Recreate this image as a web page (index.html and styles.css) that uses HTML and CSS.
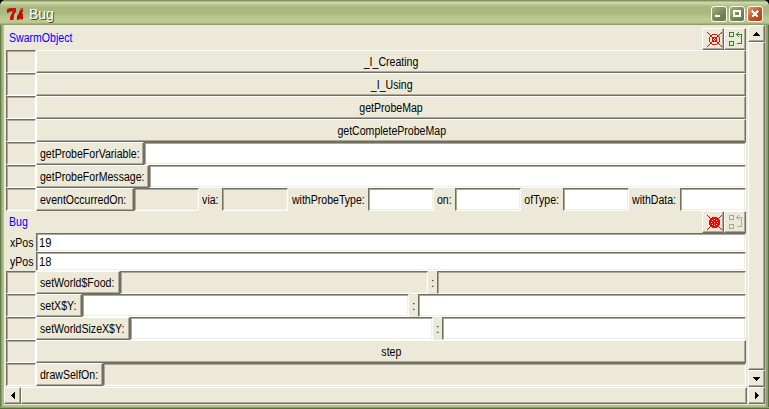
FILE: index.html
```
<!DOCTYPE html>
<html lang="en">
<head>
<meta charset="utf-8">
<title>Bug</title>
<link rel="stylesheet" href="styles.css">
</head>
<body>
<svg width="0" height="0" class="defs">
  <symbol id="cross" viewBox="0 0 15 15"><path d="M0 0h1v1h1v1h1v1h1v1h1v1h1v1h1v1h1v-1h1v-1h1v-1h1v-1h1v-1h1v-1h1v-1h1v1h-1v1h-1v1h-1v1h-1v1h-1v1h-1v1h-1v1h1v1h1v1h1v1h1v1h1v1h1v1h1v1h-1v-1h-1v-1h-1v-1h-1v-1h-1v-1h-1v-1h-1v-1h-1v1h-1v1h-1v1h-1v1h-1v1h-1v1h-1v1h-1v-1h1v-1h1v-1h1v-1h1v-1h1v-1h1v-1h1v-1h-1v-1h-1v-1h-1v-1h-1v-1h-1v-1h-1v-1h-1z"/></symbol>
  <symbol id="target" viewBox="0 0 15 15"><use href="#cross" width="15" height="15"/><path d="M5 2h5v1H5zM5 12h5v1H5zM2 5h1v5H2zM12 5h1v5h-1zM4 3h1v1H4zM10 3h1v1h-1zM3 4h1v1H3zM11 4h1v1h-1zM3 10h1v1H3zM11 10h1v1h-1zM4 11h1v1H4zM10 11h1v1h-1zM6 5h3v1H6zM6 9h3v1H6zM5 6h1v3H5zM9 6h1v3H9z"/></symbol>
  <symbol id="target-full" viewBox="0 0 15 15"><path d="M5 2h5v1h1v1h1v1h1v5h-1v1h-1v1h-1v1H5v-1H4v-1H3v-1H2V5h1V4h1V3h1z"/><use href="#cross" width="15" height="15"/><path d="M7 4h1v1H7zM7 10h1v1H7zM4 7h1v1H4zM10 7h1v1h-1zM5 5h1v1H5zM9 5h1v1H9zM5 9h1v1H5zM9 9h1v1H9zM7 7h1v1H7z" fill="#ece9d8"/></symbol>
  <symbol id="tree" viewBox="0 0 14 15"><path fill-rule="evenodd" d="M0 0h5v5H0zM1 1v3h3V1zM0 9h5v5H0zM1 10v3h3v-3zM7 2h6v10H8v-1h4V3H7z"/><path d="M8 1h1v3H8zM9 0h1v1H9zM9 4h1v1H9z"/></symbol>
</svg>
<div class="window">
  <header class="title">
    <svg class="logo" width="17" height="13" viewBox="0 0 17 13"><path d="M0 1l3-1h6v3L7 6l-1 6H3V9l2-4 1-2H3L1 5H0zM13 1l3-1v3l-1 2 1 1v5l-2 1-1-2-1 2h-2V8l2-3z" fill="#e00a0a"/><path d="M1 4l2-1h3M9 3L6 7v5M10 11l3-4 2-4M12 9l3 1" stroke="#6a0c04" fill="none" stroke-width=".7"/><path d="M13 3l2-2" stroke="#28a58c"/></svg>
    <span class="caption">Bug</span>
    <span class="ctl"><svg width="14" height="14"><path d="M3 8h5v2H3z" fill="#fff"/></svg></span>
    <span class="ctl"><svg width="14" height="14"><path d="M3 3h8v7H3zM5 5v3h4V5z" fill="#fff" fill-rule="evenodd"/></svg></span>
    <span class="ctl close"><svg width="14" height="14"><path d="M4 4l6 6M10 4l-6 6" stroke="#fff" stroke-width="2"/></svg></span>
  </header>
  <div class="client">
    <main>
      <div class="head"><span>SwarmObject</span><b class="ib red"><svg width="15" height="15"><use href="#target"/></svg></b><b class="ib green"><svg width="14" height="15"><use href="#tree"/></svg></b></div>
      <div class="row"><i class="slot"></i><div class="btn wide"><span>_I_Creating</span></div></div>
      <div class="row"><i class="slot"></i><div class="btn wide"><span>_I_Using</span></div></div>
      <div class="row"><i class="slot"></i><div class="btn wide"><span>getProbeMap</span></div></div>
      <div class="row"><i class="slot"></i><div class="btn wide"><span>getCompleteProbeMap</span></div></div>
      <div class="row"><i class="slot"></i><div class="btn w108"><span>getProbeForVariable:</span></div><div class="entry grow"></div></div>
      <div class="row"><i class="slot"></i><div class="btn w113"><span>getProbeForMessage:</span></div><div class="entry grow"></div></div>
      <div class="row"><i class="slot"></i><div class="btn w98"><span>eventOccurredOn:</span></div><div class="entry off e65"></div><div class="lab l23"><span>via:</span></div><div class="entry off e66"></div><div class="lab l80"><span>withProbeType:</span></div><div class="entry e66"></div><div class="lab l21"><span>on:</span></div><div class="entry e66"></div><div class="lab l42"><span>ofType:</span></div><div class="entry e66"></div><div class="lab l51"><span>withData:</span></div><div class="entry grow"></div></div>
      <div class="head second"><span>Bug</span><b class="ib red"><svg width="15" height="15"><use href="#target-full"/></svg></b><b class="ib dim"><svg width="14" height="15"><use href="#tree"/></svg></b></div>
      <div class="row var"><div class="name"><span>xPos</span></div><div class="entry grow"><span>19</span></div></div>
      <div class="row var"><div class="name"><span>yPos</span></div><div class="entry grow"><span>18</span></div></div>
      <div class="row"><i class="slot"></i><div class="btn w84"><span>setWorld$Food:</span></div><div class="entry off e308"></div><div class="lab colon"><span>:</span></div><div class="entry off grow"></div></div>
      <div class="row"><i class="slot"></i><div class="btn w46"><span>setX$Y:</span></div><div class="entry e327"></div><div class="lab colon"><span>:</span></div><div class="entry grow"></div></div>
      <div class="row"><i class="slot"></i><div class="btn w94"><span>setWorldSizeX$Y:</span></div><div class="entry e303"></div><div class="lab colon"><span>:</span></div><div class="entry grow"></div></div>
      <div class="row"><i class="slot"></i><div class="btn wide"><span>step</span></div></div>
      <div class="row"><i class="slot"></i><div class="btn w67"><span>drawSelfOn:</span></div><div class="entry off grow"></div></div>
    </main>
    <div class="vbar"><div class="arrow"><svg width="7" height="4"><path d="M3 0h1v1h1v1h1v1h1v1H0V3h1V2h1V1h1z"/></svg></div><div class="thumb"></div><div class="arrow"><svg width="7" height="4"><path d="M0 0h7v1H6v1H5v1H4v1H3V3H2V2H1V1H0z"/></svg></div></div>
    <div class="hbar"><div class="arrow"><svg width="4" height="7"><path d="M4 0v7H3V6H2V5H1V4H0V3h1V2h1V1h1V0z"/></svg></div><div class="thumb"></div><div class="arrow"><svg width="4" height="7"><path d="M0 0h1v1h1v1h1v1h1v1H3v1H2v1H1v1H0z"/></svg></div></div>
  </div>
</div>
</body>
</html>
```
FILE: styles.css
```
* { box-sizing: border-box; }
body { margin: 0; background: #000; font: 12px/15px "Liberation Sans", Arial, sans-serif; color: #000; }
.defs { display: none; }
svg { display: block; flex: none; shape-rendering: crispEdges; }
.window { width: 769px; height: 409px; padding: 0 4px 4px; border-radius: 6px 6px 0 0; background: linear-gradient(90deg, #657d4f 0 1px, #8ba270 1px 2px, #a7b97e 2px 3px, #b5c18b 3px 766px, #8ba270 766px 768px, #55703f 768px); box-shadow: inset 0 -1px #55703f, inset 0 -2px #8ba270; overflow: hidden; }
.title { height: 25px; margin: 0 -4px; padding: 5px 6px 0 7px; display: flex; align-items: flex-start; background: linear-gradient(#7d9560 0, #7d9560 1px, #d5dcaf 2px, #c2cc98 4px, #a8b77e 7px, #a8b77e 12px, #c0cb94 20px, #b9c58c 23px, #8ba16c 24px); }
.logo { margin: 3px 5px 0 0; shape-rendering: auto; }
.caption { flex: 1; color: #fff; font-size: 14px; line-height: 19px; text-shadow: 1px 1px #3f4d22; }
.ctl { width: 16px; height: 16px; margin: 1px 0 0 2px; border: 1px solid #fff; border-radius: 3px; background: linear-gradient(135deg, #a3b282, #738552 60%, #65784a); }
.ctl.close { background: linear-gradient(135deg, #e29b7a, #c54b22 60%, #bd3c17); }
.client { height: 380px; background: #ece9d8; display: grid; grid-template-columns: 744px 17px; grid-template-rows: 362px 18px; }
main { padding: 3px 2px 2px; height: 362px; }
main span { display: block; white-space: nowrap; transform: scaleX(.88); transform-origin: 0 50%; }
.head { height: 22px; padding-left: 3px; display: flex; align-items: flex-start; color: #00f; line-height: 21px; }
.head.second { line-height: 23px; }
.head > span { flex: 1; }
.ib { width: 22px; height: 22px; padding: 3px 0 0 4px; border: 1px solid; border-color: #fff #716f64 #716f64 #fff; box-shadow: inset -1px -1px #aca899; }
.red { fill: #f00; }
.green { fill: #228b22; }
.dim { fill: #aca899; }
.row { display: flex; height: 23px; }
.row.var { height: 19px; }
.slot { width: 30px; flex: none; border: 1px solid; border-color: #716f64 #fff #fff #716f64; box-shadow: inset 1px 1px #aca899, inset -1px -1px #f1efe2; }
.btn { flex: none; display: flex; align-items: center; padding: 2px 0 0 3px; border: 1px solid; border-color: #fff #716f64 #716f64 #fff; box-shadow: inset -1px -1px #aca899; }
.btn.wide { flex: 1; justify-content: center; padding: 2px 0 0 1px; }
.btn.wide span, .lab span { transform-origin: 50% 50%; }
.entry { flex: none; background: #fff; border: 1px solid; border-color: #716f64 #fff #fff #716f64; box-shadow: inset 1px 1px #aca899, inset -1px -1px #f1efe2; padding: 2px 0 0 2px; }
.entry span { transform: scaleX(.93); }
.entry.off { background: #ece9d8; }
.entry.grow { flex: 1 1 0; min-width: 0; }
.lab { flex: none; display: flex; align-items: center; justify-content: center; padding-top: 2px; }
.colon { width: 9px; }
.name { width: 30px; padding: 3px 0 0 4px; }
.w108 { width: 108px; }
.w113 { width: 113px; }
.w98 { width: 98px; }
.w84 { width: 84px; }
.w46 { width: 46px; }
.w94 { width: 94px; }
.w67 { width: 67px; }
.e65 { width: 65px; }
.e66 { width: 66px; }
.e308 { width: 308px; }
.e327 { width: 327px; }
.e303 { width: 303px; }
.l23 { width: 23px; }
.l80 { width: 80px; }
.l21 { width: 21px; }
.l42 { width: 42px; }
.l51 { width: 51px; }
.vbar { display: flex; flex-direction: column; }
.hbar { grid-column: 1 / 3; display: flex; }
.arrow, .thumb { border: 1px solid; border-color: #fff #716f64 #716f64 #fff; box-shadow: inset -1px -1px #aca899; }
.arrow { flex: none; width: 17px; height: 17px; display: flex; align-items: center; justify-content: center; }
.thumb { flex: 1; }
.hbar .thumb { height: 17px; margin-right: 1px; }
```
